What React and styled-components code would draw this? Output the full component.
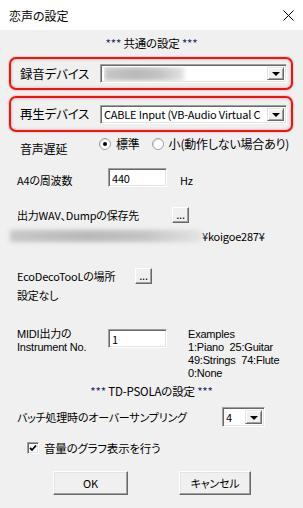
import React from 'react';
import styled, { createGlobalStyle } from 'styled-components';

const GlobalStyle = createGlobalStyle`
  html, body { margin: 0; padding: 0; background: #f0f0f0; }
  body {
    font-family: "Noto Sans CJK JP", "Liberation Sans", sans-serif;
    font-size: 11px;
    letter-spacing: -0.2px;
    font-feature-settings: "palt";
    color: #000;
  }
`;

const Window = styled.div`
  width: 303px;
  height: 508px;
  background: #f0f0f0;
  display: flex;
  flex-direction: column;
  overflow: hidden;
`;

const TitleBar = styled.div`
  height: 30px;
  flex: none;
  background: #fff;
  display: flex;
  align-items: center;
  justify-content: space-between;
  padding: 0 9px 0 9px;
  box-sizing: border-box;
  font-size: 12px;
  letter-spacing: 0;
`;

const Body = styled.div`
  display: flex;
  flex-direction: column;
`;

const SectionTitle = styled.div`
  margin-top: ${({ $top }) => $top}px;
  height: 14px;
  line-height: 14px;
  text-align: center;
  white-space: nowrap;
  font-size: 11.5px;
`;

const Stars = styled.span`
  color: #1a2a6a;
`;

const RedBox = styled.div`
  margin: ${({ $top }) => $top}px 0 0 9px;
  width: 284px;
  height: ${({ $h }) => $h}px;
  box-sizing: border-box;
  border: 2px solid #ff0d0d;
  border-radius: 7px;
  box-shadow: inset 0 0 3px rgba(0, 0, 0, 0.3), 0 0 2px rgba(0, 0, 0, 0.35);
  display: flex;
  align-items: center;
  padding-left: 9px;
`;

const Label = styled.div`
  width: ${({ $w }) => $w}px;
  flex: none;
  font-size: ${({ $size }) => $size || 11}px;
  line-height: 14px;
  padding-top: ${({ $pt }) => $pt || 0}px;
  white-space: nowrap;
`;

const Row = styled.div`
  display: flex;
  align-items: ${({ $align }) => $align || 'center'};
  margin-top: ${({ $top }) => $top}px;
  padding-left: ${({ $left }) => $left}px;
  height: ${({ $h }) => ($h ? `${$h}px` : 'auto')};
  white-space: nowrap;
`;

const Sunken = styled.div`
  box-sizing: border-box;
  width: ${({ $w }) => $w}px;
  height: ${({ $h }) => $h}px;
  background: #fff;
  border-top: 1px solid #a0a0a0;
  border-left: 1px solid #a0a0a0;
  border-right: 1px solid #fff;
  border-bottom: 1px solid #fff;
  box-shadow: inset 1px 1px 0 #696969, inset -1px -1px 0 #e3e3e3;
  display: flex;
  align-items: center;
  padding-left: 3px;
  flex: none;
  overflow: hidden;
  white-space: nowrap;
`;

const ComboText = styled.div`
  flex: 1;
  overflow: hidden;
  line-height: 14px;
`;

const ArrowButton = styled.div`
  width: 17px;
  height: calc(100% - 4px);
  margin-right: 2px;
  box-sizing: border-box;
  background: #f0f0f0;
  border-top: 1px solid #e3e3e3;
  border-left: 1px solid #e3e3e3;
  border-right: 1px solid #696969;
  border-bottom: 1px solid #696969;
  box-shadow: inset 1px 1px 0 #fff, inset -1px -1px 0 #a0a0a0;
  display: flex;
  align-items: center;
  justify-content: center;
  flex: none;
`;

const Triangle = styled.div`
  width: 0;
  height: 0;
  border-left: 4px solid transparent;
  border-right: 4px solid transparent;
  border-top: 4px solid #000;
  margin-top: 1px;
`;

const Blur = styled.div`
  width: ${({ $w }) => $w}px;
  height: ${({ $h }) => $h}px;
  flex: none;
  background: linear-gradient(90deg, #c8c8c8 0%, #b9b9b9 40%, #c4c4c4 70%, #e4e4e4 100%);
  filter: blur(2px);
`;

const RadioCircle = styled.div`
  width: 12px;
  height: 12px;
  box-sizing: border-box;
  border-radius: 50%;
  border: 1px solid #a0a0a0;
  background: #fff;
  box-shadow: inset 1px 1px 0 #dcdcdc;
  display: flex;
  align-items: center;
  justify-content: center;
  flex: none;
  margin-top: 1px;
  margin-left: ${({ $ml }) => $ml || 0}px;
  &::after {
    content: '';
    width: 4px;
    height: 4px;
    border-radius: 50%;
    background: ${({ $on }) => ($on ? '#000' : 'transparent')};
  }
`;

const OptText = styled.span`
  margin-left: ${({ $ml }) => $ml}px;
  padding-top: ${({ $pt }) => $pt || 0}px;
  font-size: ${({ $size }) => $size || 11}px;
  line-height: 14px;
`;

const SmallButton = styled.div`
  width: 17px;
  height: 16px;
  box-sizing: border-box;
  background: #f0f0f0;
  border-top: 1px solid #fff;
  border-left: 1px solid #fff;
  border-right: 1px solid #696969;
  border-bottom: 1px solid #696969;
  box-shadow: inset -1px -1px 0 #a0a0a0;
  display: flex;
  align-items: flex-end;
  justify-content: center;
  font-size: 11px;
  line-height: 11px;
  padding-bottom: 2px;
  flex: none;
`;

const PathLine = styled.div`
  margin-top: 6px;
  padding-left: 10px;
  height: 14px;
  display: flex;
  align-items: center;
  white-space: nowrap;
`;

const Lines = styled.div`
  font-family: "Liberation Sans", "Noto Sans CJK JP", sans-serif;
  line-height: 13px;
  width: ${({ $w }) => ($w ? `${$w}px` : 'auto')};
  margin-left: ${({ $ml }) => $ml || 0}px;
  padding-top: ${({ $pt }) => $pt || 0}px;
  flex: none;
`;

const CheckBox = styled.div`
  width: 12px;
  height: 12px;
  box-sizing: border-box;
  background: #fff;
  border-top: 1px solid #a0a0a0;
  border-left: 1px solid #a0a0a0;
  border-right: 1px solid #fff;
  border-bottom: 1px solid #fff;
  box-shadow: inset 1px 1px 0 #696969, inset -1px -1px 0 #e3e3e3;
  display: flex;
  align-items: center;
  justify-content: center;
  flex: none;
`;

const DialogButton = styled.div`
  width: ${({ $w }) => $w}px;
  height: 24px;
  box-sizing: border-box;
  background: #f0f0f0;
  border-top: 1px solid #fff;
  border-left: 1px solid #fff;
  border-right: 1px solid #696969;
  border-bottom: 1px solid #696969;
  box-shadow: inset -1px -1px 0 #a0a0a0, inset 1px 1px 0 #e3e3e3;
  display: flex;
  align-items: center;
  justify-content: center;
  flex: none;
`;

const Buttons = styled.div`
  display: flex;
  margin-top: 16px;
  padding-left: 53px;
  gap: 51px;
`;

const Combo = ({ w, h, children }) => (
  <Sunken $w={w} $h={h}>
    <ComboText>{children}</ComboText>
    <ArrowButton>
      <Triangle />
    </ArrowButton>
  </Sunken>
);

export default function App() {
  return (
    <>
      <GlobalStyle />
      <Window>
        <TitleBar>
          <span>恋声の設定</span>
          <svg width="11" height="11" viewBox="0 0 11 11">
            <path d="M0.5 0.5 L10.5 10.5 M10.5 0.5 L0.5 10.5" stroke="#000" strokeWidth="1" />
          </svg>
        </TitleBar>
        <Body>
          <SectionTitle $top={6}>
            <Stars>***</Stars> 共通の設定 <Stars>***</Stars>
          </SectionTitle>

          <RedBox $top={7} $h={33}>
            <Label $w={80} $size={12.5}>録音デバイス</Label>
            <Combo w={187} h={19}>
              <Blur $w={80} $h={14} />
            </Combo>
          </RedBox>

          <RedBox $top={6} $h={36}>
            <Label $w={80} $size={12.5}>再生デバイス</Label>
            <Combo w={187} h={19}>CABLE Input (VB-Audio Virtual C</Combo>
          </RedBox>

          <Row $top={5} $left={20} $align="flex-start" $h={14}>
            <Label $w={79} $pt={5} $size={12}>音声遅延</Label>
            <RadioCircle $on />
            <OptText $ml={5} $size={12}>標準</OptText>
            <RadioCircle $ml={12} />
            <OptText $ml={5} $size={12}>小(動作しない場合あり)</OptText>
          </Row>

          <Row $top={17} $left={17} $h={19}>
            <Label $w={91} $pt={5}>A4の周波数</Label>
            <Sunken $w={59} $h={19}>440</Sunken>
            <OptText $ml={13} $pt={5}>Hz</OptText>
          </Row>

          <Row $top={20} $left={17} $h={16}>
            <Label $w={155}>出力WAV、Dumpの保存先</Label>
            <SmallButton>...</SmallButton>
          </Row>

          <PathLine>
            <Blur $w={192} $h={12} />
            <span>¥koigoe287¥</span>
          </PathLine>

          <Row $top={25} $left={17} $h={16}>
            <Label $w={118}>EcoDecoTooLの場所</Label>
            <SmallButton>...</SmallButton>
          </Row>

          <Row $top={4} $left={17} $h={14}>
            <Label $w={100}>設定なし</Label>
          </Row>

          <Row $top={25} $left={17} $align="flex-start">
            <Lines $w={91} $pt={1}>
              MIDI出力の
              <br />
              Instrument No.
            </Lines>
            <Sunken $w={59} $h={19} style={{ marginTop: 2 }}>1</Sunken>
            <Lines $ml={21} $pt={1}>
              Examples
              <br />
              1:Piano&nbsp;&nbsp;25:Guitar
              <br />
              49:Strings&nbsp;&nbsp;74:Flute
              <br />
              0:None
            </Lines>
          </Row>

          <SectionTitle $top={4}>
            <Stars>***</Stars> TD-PSOLAの設定 <Stars>***</Stars>
          </SectionTitle>

          <Row $top={9} $left={17} $h={20}>
            <Label $w={205}>バッチ処理時のオーバーサンプリング</Label>
            <Combo w={43} h={20}>4</Combo>
          </Row>

          <Row $top={14} $left={27} $h={14}>
            <CheckBox>
              <svg width="8" height="8" viewBox="0 0 8 8">
                <path d="M1 4 L3 6 L7 1.5" stroke="#000" strokeWidth="1.8" fill="none" />
              </svg>
            </CheckBox>
            <OptText $ml={5} $size={11.5}>音量のグラフ表示を行う</OptText>
          </Row>

          <Buttons>
            <DialogButton $w={75}>OK</DialogButton>
            <DialogButton $w={72}>キャンセル</DialogButton>
          </Buttons>
        </Body>
      </Window>
    </>
  );
}
